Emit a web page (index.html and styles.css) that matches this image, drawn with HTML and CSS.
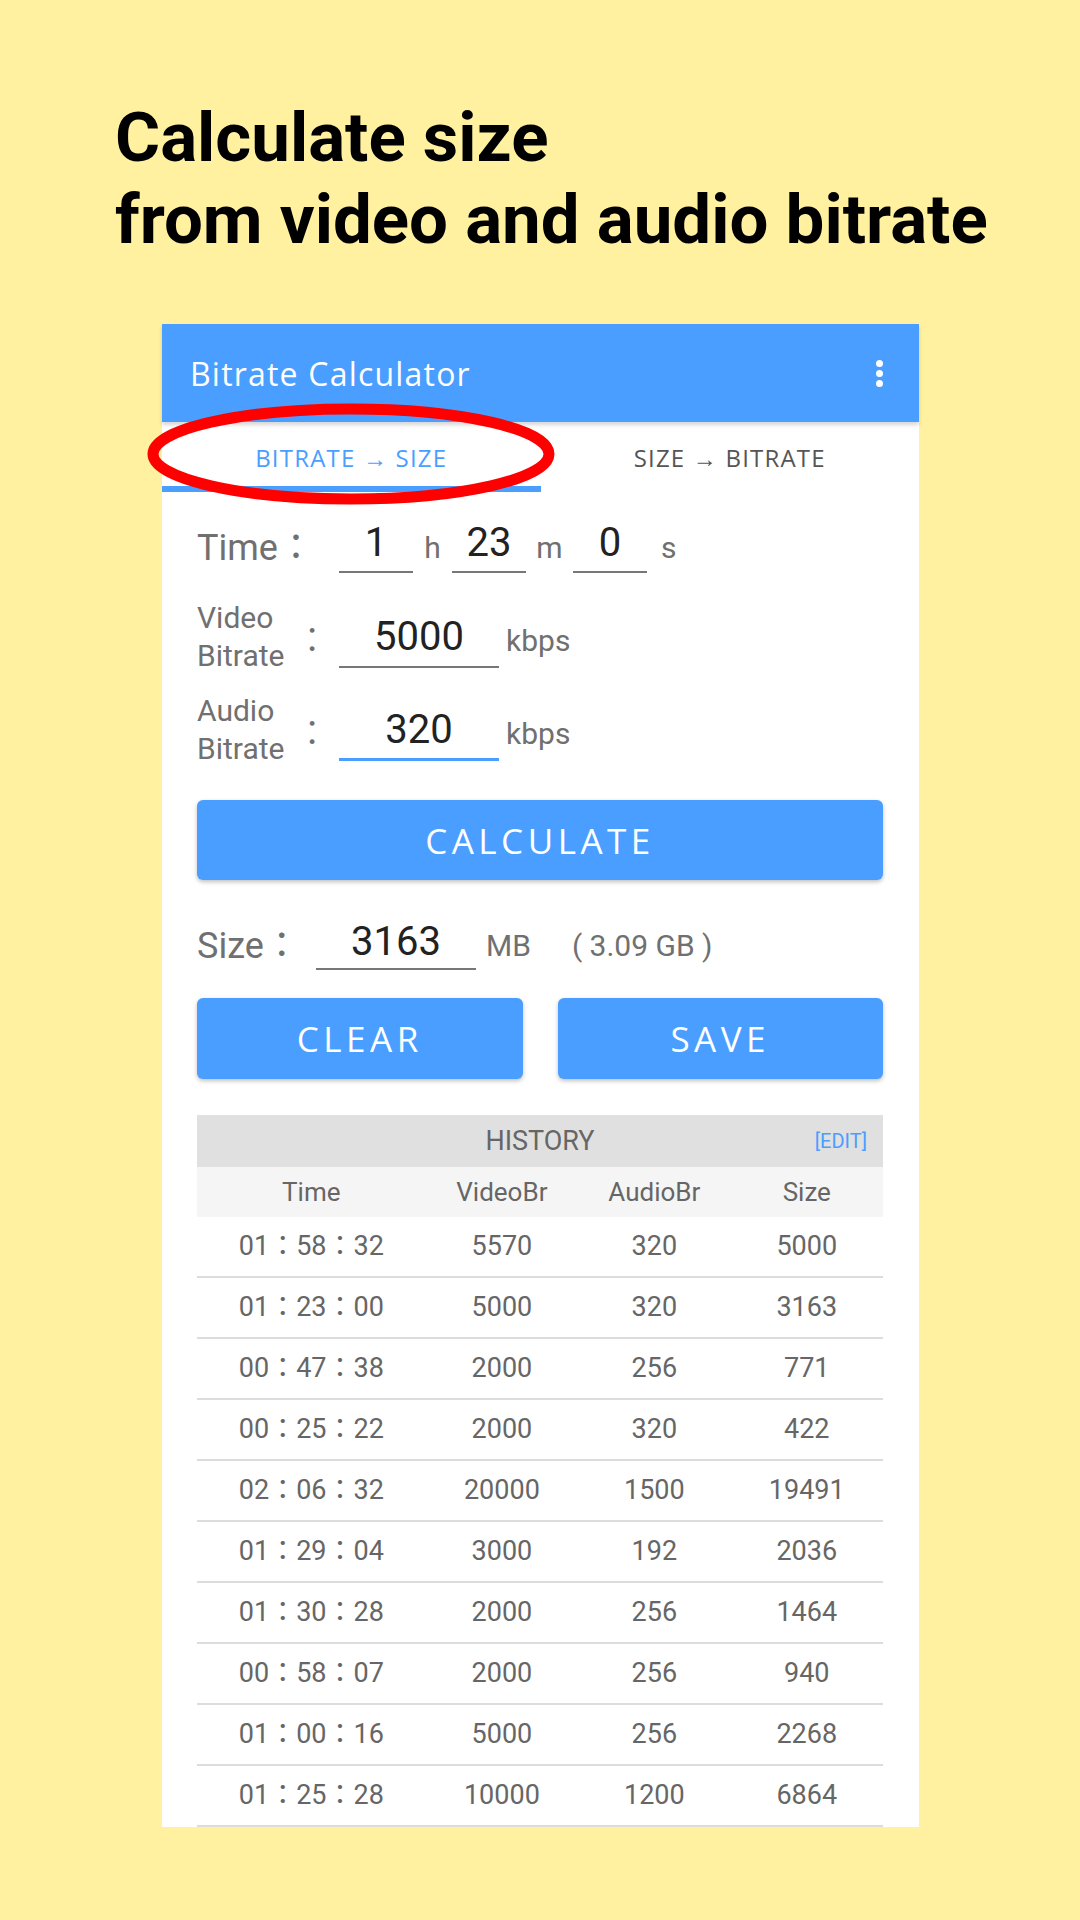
FILE: index.html
```html
<!DOCTYPE html>
<html lang="en">
<head>
    <meta charset="UTF-8">
    <meta name="viewport" content="width=device-width, initial-scale=1.0">
    <title>Bitrate Calculator</title>
    <link rel="stylesheet" href="styles.css">
</head>
<body>
    <h1 class="headline">Calculate size<br>from video and audio bitrate</h1>

    <div class="phone">
        <header class="appbar">
            <span class="appbar-title">Bitrate Calculator</span>
            <span class="menu"><i></i><i></i><i></i></span>
        </header>

        <nav class="tabs">
            <div class="tab active">BITRATE → SIZE</div>
            <div class="tab">SIZE → BITRATE</div>
        </nav>

        <!-- red circle around the active tab -->
        <svg class="mark" width="430" height="116" viewBox="0 0 430 116">
            <ellipse cx="216" cy="58" rx="198" ry="45" fill="none" stroke="#f00" stroke-width="11"/>
        </svg>

        <div class="form">
            <div class="row time-row">
                <span class="label big">Time：</span>
                <span class="field small">1</span>
                <span class="unit h">h</span>
                <span class="field small">23</span>
                <span class="unit m">m</span>
                <span class="field small">0</span>
                <span class="unit s">s</span>
            </div>

            <div class="row video-row">
                <span class="label two">Video<br>Bitrate</span>
                <span class="colon">:</span>
                <span class="field wide">5000</span>
                <span class="unit kbps">kbps</span>
            </div>

            <div class="row audio-row">
                <span class="label two">Audio<br>Bitrate</span>
                <span class="colon">:</span>
                <span class="field wide focused">320</span>
                <span class="unit kbps">kbps</span>
            </div>

            <button class="btn calc">CALCULATE</button>

            <div class="row size-row">
                <span class="label big size">Size：</span>
                <span class="field wide">3163</span>
                <span class="unit mb">MB</span>
                <span class="unit gb">( 3.09 GB )</span>
            </div>

            <div class="btn-row">
                <button class="btn">CLEAR</button>
                <button class="btn">SAVE</button>
            </div>

            <div class="history">
                <div class="history-head">
                    HISTORY
                    <span class="edit">[EDIT]</span>
                </div>
                <div class="grid cols">
                    <span>Time</span><span>VideoBr</span><span>AudioBr</span><span>Size</span>
                </div>
                <div id="historyList"></div>
            </div>
        </div>
    </div>

    <script>
        const history = [
            ['01：58：32', 5570, 320, 5000],
            ['01：23：00', 5000, 320, 3163],
            ['00：47：38', 2000, 256, 771],
            ['00：25：22', 2000, 320, 422],
            ['02：06：32', 20000, 1500, 19491],
            ['01：29：04', 3000, 192, 2036],
            ['01：30：28', 2000, 256, 1464],
            ['00：58：07', 2000, 256, 940],
            ['01：00：16', 5000, 256, 2268],
            ['01：25：28', 10000, 1200, 6864]
        ];

        const list = document.getElementById('historyList');
        history.forEach(item => {
            const row = document.createElement('div');
            row.className = 'grid item';
            item.forEach(value => {
                const cell = document.createElement('span');
                cell.textContent = value;
                row.appendChild(cell);
            });
            list.appendChild(row);
        });
    </script>
</body>
</html>
```

FILE: styles.css
```css
body {
    margin: 0;
    width: 1080px;
    height: 1920px;
    overflow: hidden;
    background: #fff1a0;
    font-family: Roboto, "Noto Sans CJK JP", sans-serif;
}

.headline {
    box-sizing: border-box;
    height: 324px;
    margin: 0;
    padding: 97px 0 0 115px;
    font: 700 69px/82px Roboto, sans-serif;
    color: #000;
}

.phone {
    position: relative;
    margin-left: 162px;
    width: 757px;
    height: 1503px;
    background: #fff;
    display: flex;
    flex-direction: column;
}

.appbar {
    position: relative;
    z-index: 1;
    flex: none;
    height: 98px;
    background: #4a9eff;
    display: flex;
    align-items: center;
    justify-content: space-between;
    padding: 0 36px 0 28px;
    box-shadow: 0 3px 4px rgba(0, 0, 0, 0.16);
}

.appbar-title {
    font: 400 32px "Open Sans", sans-serif;
    letter-spacing: 1.2px;
    color: #fff;
}

.menu {
    display: flex;
    flex-direction: column;
    gap: 3px;
}

.menu i {
    width: 7px;
    height: 7px;
    border-radius: 50%;
    background: #fff;
}

.tabs {
    flex: none;
    display: flex;
    height: 70px;
}

.tab {
    flex: 1;
    display: flex;
    align-items: center;
    justify-content: center;
    font: 400 24px "Open Sans", sans-serif;
    letter-spacing: 1.2px;
    color: #555;
}

.tab.active {
    color: #4a9eff;
    box-shadow: inset 0 -6px 0 #4a9eff;
}

.mark {
    position: absolute;
    left: -27px;
    top: 72px;
    z-index: 2;
}

.form {
    flex: 1;
    min-height: 0;
    display: flex;
    flex-direction: column;
    padding: 0 36px 0 35px;
}

.row {
    display: flex;
    align-items: center;
}

.time-row {
    margin-top: 23px;
}

.video-row {
    margin-top: 26px;
}

.label {
    color: #707070;
}

.label.big {
    width: 142px;
    font-size: 36px;
}

.label.size {
    width: 119px;
}

.label.two {
    width: 110px;
    font-size: 30px;
    line-height: 38px;
}

.colon {
    width: 32px;
    font-size: 42px;
    line-height: 42px;
    color: #707070;
}

.field {
    box-sizing: border-box;
    height: 58px;
    line-height: 56px;
    text-align: center;
    font-size: 40px;
    color: #222;
    border-bottom: 2px solid #777;
}

.field.small {
    width: 74px;
}

.field.wide {
    width: 160px;
    height: 62px;
    line-height: 62px;
}

.field.focused {
    border-bottom: 3px solid #4a9eff;
}

.unit {
    font-size: 30px;
    color: #707070;
    padding-top: 6px;
}

.unit.h {
    width: 39px;
    text-align: center;
}

.unit.m {
    width: 47px;
    text-align: center;
}

.unit.s {
    margin-left: 14px;
}

.unit.kbps {
    margin-left: 7px;
}

.audio-row {
    margin-top: 17px;
}

.btn {
    border: none;
    border-radius: 6px;
    background: #4a9eff;
    color: #fff;
    font: 400 35px "Open Sans", sans-serif;
    letter-spacing: 4.5px;
    box-shadow: 0 2px 4px rgba(0, 0, 0, 0.25);
    height: 80px;
    padding: 0;
}

.btn.calc {
    margin-top: 32px;
}

.size-row {
    margin-top: 34px;
}

.size-row .field {
    height: 56px;
    line-height: 56px;
}

.unit.mb {
    margin-left: 10px;
}

.unit.gb {
    margin-left: 41px;
}

.btn-row {
    display: flex;
    gap: 35px;
    margin-top: 28px;
}

.btn-row .btn {
    flex: 1;
    height: 81px;
}

.history {
    flex: 1;
    min-height: 0;
    overflow: hidden;
    margin-top: 36px;
    color: #666;
}

.history-head {
    position: relative;
    height: 52px;
    line-height: 52px;
    background: #e0e0e0;
    text-align: center;
    font-size: 27px;
}

.edit {
    position: absolute;
    right: 16px;
    top: 0;
    font-size: 20px;
    color: #4a9eff;
}

.grid {
    display: grid;
    grid-template-columns: 1.5fr 1fr 1fr 1fr;
    text-align: center;
    font-size: 26px;
}

.cols {
    height: 50px;
    line-height: 50px;
    background: #f5f5f5;
}

.item {
    height: 59px;
    line-height: 59px;
    border-bottom: 2px solid #dcdcdc;
    font-size: 27px;
}
```
